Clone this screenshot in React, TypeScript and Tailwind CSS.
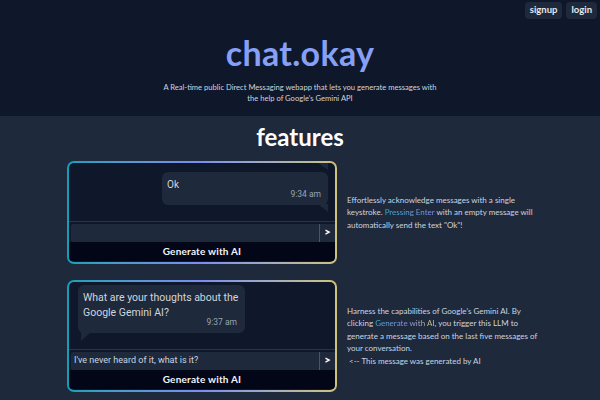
import React from "react";

const lato = { fontFamily: "Lato, 'Noto Sans', sans-serif" };
const roboto = { fontFamily: "Roboto, 'Noto Sans', sans-serif" };

function GradientCard({ children, h }: { children: React.ReactNode; h: string }) {
  return (
    <div className={`w-[270px] ${h} shrink-0 rounded-[7px] p-[2px] bg-gradient-to-r from-[#0e9fb8] via-[#7b8ef0] to-[#cfc27a]`}>
      <div className="w-full h-full rounded-[5px] bg-[#0f172a] overflow-hidden flex flex-col">{children}</div>
    </div>
  );
}

function InputRow({ text }: { text?: string }) {
  return (
    <div className="h-[21px] border-t border-[#2a3547] flex items-center pl-[2px] pt-[1px]">
      <div className="flex-1 h-[18px] bg-[#1e293b] rounded-l-[2px] flex items-center pl-[3px] text-[9px] text-[#cbd5e1]" style={roboto}>
        {text}
      </div>
      <div className="w-[1px] h-[18px] bg-[#4b5563]"></div>
      <div className="w-[15px] h-[18px] bg-[#1e293b] flex items-center justify-center text-[11px] font-black text-white" style={lato}>
        &gt;
      </div>
    </div>
  );
}

function GenerateBar() {
  return (
    <div className="h-[19px] bg-[#020617] flex items-center justify-center text-[10px] font-bold text-[#f1f5f9] tracking-[0.2px]" style={lato}>
      Generate with AI
    </div>
  );
}

export default function App() {
  return (
    <div className="w-[600px] h-[400px] overflow-hidden bg-[#1e293b]" style={lato}>
      <header className="h-[116px] bg-[#0f172a] flex flex-col items-center relative">
        <div className="absolute top-[2px] right-[3px] flex gap-[4px]">
          <div className="h-[17px] px-[5px] rounded-[4px] bg-[#1e293b] text-[9.5px] font-bold text-[#e5e7eb] flex items-center">signup</div>
          <div className="h-[17px] px-[5px] rounded-[4px] bg-[#1e293b] text-[9.5px] font-bold text-[#e5e7eb] flex items-center">login</div>
        </div>
        <h1 className="mt-[33px] text-[34px] leading-[40px] font-bold text-[#86a0f7] tracking-[0.3px]">chat.okay</h1>
        <p className="mt-[9px] w-[282px] text-center text-[7.6px] leading-[11px] text-[#d1d5db]">
          A Real-time public Direct Messaging webapp that lets you generate messages with the help of Google's Gemini API
        </p>
      </header>
      <section className="flex flex-col items-center">
        <h2 className="mt-[6px] text-[24px] leading-[30px] font-bold text-white">features</h2>
        <div className="mt-[9px] flex flex-col gap-[16px] w-full pl-[67px]">
          <div className="flex items-center gap-[10px]">
            <GradientCard h="h-[103px]">
              <div className="h-[58px] relative">
                <div className="absolute right-[7px] top-[0px] w-[10px] h-[7px] bg-[#1e293b] [clip-path:polygon(0_0,100%_0,100%_100%)]"></div>
                <div className="absolute right-[7px] top-[9px] w-[166px] h-[33px] bg-[#1e293b] rounded-[6px]" style={roboto}>
                  <div className="absolute left-[5px] top-[5px] text-[10px] text-[#d1d5db]">Ok</div>
                  <div className="absolute right-[7px] bottom-[4px] text-[8.5px] text-[#9ca3af]">9:34 am</div>
                </div>
                <div className="absolute right-[7px] top-[41px] w-[10px] h-[8px] bg-[#1e293b] [clip-path:polygon(0_0,100%_0,100%_100%)]"></div>
              </div>
              <InputRow />
              <GenerateBar />
            </GradientCard>
            <p className="w-[192px] text-[8px] leading-[12.5px] text-[#cbd5e1]">
              Effortlessly acknowledge messages with a single keystroke.{" "}
              <span className="bg-gradient-to-r from-[#22b8d8] to-[#8b8ff0] bg-clip-text text-transparent">Pressing Enter</span>{" "}
              with an empty message will automatically send the text "Ok"!
            </p>
          </div>
          <div className="flex items-center gap-[10px]">
            <GradientCard h="h-[112px]">
              <div className="h-[67px] relative">
                <div className="absolute left-[9px] top-[3px] w-[167px] h-[48px] bg-[#1e293b] rounded-[6px]" style={roboto}>
                  <div className="absolute left-[5px] top-[5px] text-[10.5px] leading-[15px] text-[#d1d5db] w-[160px]">
                    What are your thoughts about the Google Gemini AI?
                  </div>
                  <div className="absolute right-[8px] bottom-[4px] text-[8.5px] text-[#9ca3af]">9:37 am</div>
                </div>
                <div className="absolute left-[12px] top-[50px] w-[10px] h-[9px] bg-[#1e293b] [clip-path:polygon(0_0,100%_0,0_100%)]"></div>
              </div>
              <InputRow text="I've never heard of it, what is it?" />
              <GenerateBar />
            </GradientCard>
            <div className="w-[192px] text-[8px] leading-[12.5px] text-[#cbd5e1]">
              <p>
                Harness the capabilities of Google's Gemini AI. By clicking{" "}
                <span className="bg-gradient-to-r from-[#22b8d8] via-[#8b8ff0] to-[#d8c878] bg-clip-text text-transparent">Generate with AI</span>, you trigger this LLM to generate a message based on the last five messages of your conversation.
              </p>
              <p className="pl-[2px]">&lt;-- This message was generated by AI</p>
            </div>
          </div>
        </div>
      </section>
    </div>
  );
}
